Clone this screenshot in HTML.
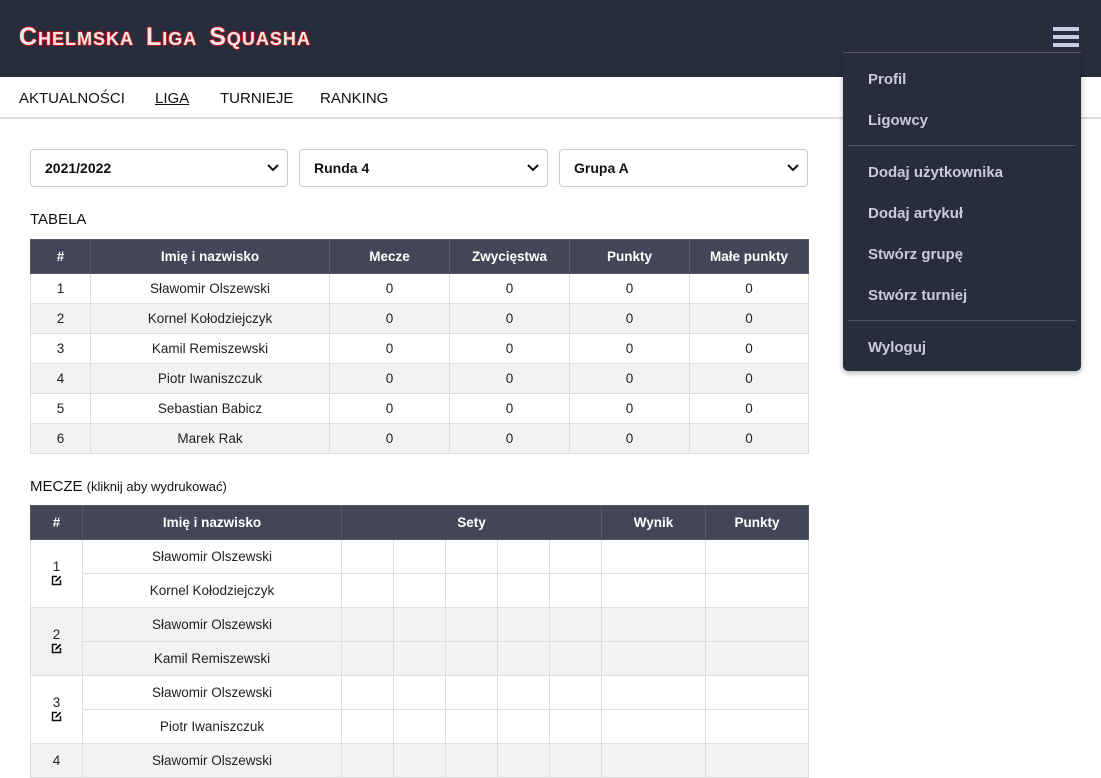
<!DOCTYPE html>
<html><head><meta charset="utf-8"><style>
*{box-sizing:border-box;margin:0;padding:0}
body{width:1101px;height:747px;overflow:hidden;background:#fff;font-family:"Liberation Sans","DejaVu Sans",sans-serif;color:#222;position:relative}
.hdr{position:absolute;left:0;top:0;width:1101px;height:77px;background:#282d3e}
.logo{position:absolute;left:19px;top:23px;font-family:"Liberation Sans",sans-serif;font-weight:bold;font-variant:small-caps;font-size:25px;letter-spacing:1px;color:#f2e6e6;text-shadow:1px 0 #c01818,-1px 0 #c01818,0 1px #c01818,0 -1px #c01818;word-spacing:4px}
.ham{position:absolute;left:1053px;top:27px;width:26px}
.ham i{display:block;height:4px;background:#c9cde0;margin-bottom:4px}
.nav{position:absolute;left:0;top:77px;width:1101px;height:42px;border-bottom:2px solid #ddd;font-size:15px;color:#111}
.nav span{position:absolute;top:13px}
.sel{position:absolute;top:149px;height:38px;border:1px solid #ccc;border-radius:4px;font-size:14px;font-weight:bold;padding:10px 0 0 14px;color:#111}
.sel svg{position:absolute;right:8px;top:14px}
.h{position:absolute;left:30px;font-size:15px;color:#111}
table{position:absolute;left:30px;border-collapse:collapse;table-layout:fixed;font-size:13.5px;text-align:center;color:#222}
th{background:#434656;color:#fff;font-weight:bold;font-size:13.5px;border:1px solid #555869;height:34px}
td{border:1px solid #ddd}
.t1 tr.r{height:30px}
.t1 tr.r:nth-child(odd) td{background:#f2f2f2}
.t2 td{height:34px}
.g td{background:#f2f2f2}
.menu{position:absolute;left:843px;top:52px;width:238px;height:319px;background:#282d3e;border-radius:0 0 5px 5px;border-top:1px solid #555a6a;box-shadow:0 2px 6px rgba(0,0,0,.3)}
.menu span{position:absolute;left:25px;font-size:15px;font-weight:bold;color:#c8cbd9}
.menu hr{position:absolute;left:5px;width:228px;border:0;border-top:1px solid #4d5263}
</style></head><body>
<div class="hdr"><div class="logo">Chelmska Liga Squasha</div><div class="ham"><i></i><i></i><i></i></div></div>
<div class="nav"><span style="left:19px">AKTUALNOŚCI</span><span style="left:155px;text-decoration:underline">LIGA</span><span style="left:220px">TURNIEJE</span><span style="left:320px">RANKING</span></div>
<div class="sel" style="left:30px;width:258px">2021/2022<svg width="12" height="8" viewBox="0 0 12 8"><path d="M1 1l5 5 5-5" stroke="#111" stroke-width="2" fill="none"/></svg></div>
<div class="sel" style="left:299px;width:249px">Runda 4<svg width="12" height="8" viewBox="0 0 12 8"><path d="M1 1l5 5 5-5" stroke="#111" stroke-width="2" fill="none"/></svg></div>
<div class="sel" style="left:559px;width:249px">Grupa A<svg width="12" height="8" viewBox="0 0 12 8"><path d="M1 1l5 5 5-5" stroke="#111" stroke-width="2" fill="none"/></svg></div>
<div class="h" style="top:211px">TABELA</div>
<table class="t1" style="top:239px;width:778px">
<colgroup><col style="width:60px"><col style="width:239px"><col style="width:120px"><col style="width:120px"><col style="width:120px"><col style="width:119px"></colgroup>
<tr><th>#</th><th>Imię i nazwisko</th><th>Mecze</th><th>Zwycięstwa</th><th>Punkty</th><th>Małe punkty</th></tr>
<tr class="r"><td>1</td><td>Sławomir Olszewski</td><td>0</td><td>0</td><td>0</td><td>0</td></tr>
<tr class="r"><td>2</td><td>Kornel Kołodziejczyk</td><td>0</td><td>0</td><td>0</td><td>0</td></tr>
<tr class="r"><td>3</td><td>Kamil Remiszewski</td><td>0</td><td>0</td><td>0</td><td>0</td></tr>
<tr class="r"><td>4</td><td>Piotr Iwaniszczuk</td><td>0</td><td>0</td><td>0</td><td>0</td></tr>
<tr class="r"><td>5</td><td>Sebastian Babicz</td><td>0</td><td>0</td><td>0</td><td>0</td></tr>
<tr class="r"><td>6</td><td>Marek Rak</td><td>0</td><td>0</td><td>0</td><td>0</td></tr>
</table>
<div class="h" style="top:478px">MECZE <span style="font-size:13px">(kliknij aby wydrukować)</span></div>
<table class="t2" style="top:505px;width:778px">
<colgroup><col style="width:52px"><col style="width:259px"><col style="width:52px"><col style="width:52px"><col style="width:52px"><col style="width:52px"><col style="width:52px"><col style="width:104px"><col style="width:103px"></colgroup>
<tr><th>#</th><th>Imię i nazwisko</th><th colspan="5">Sety</th><th>Wynik</th><th>Punkty</th></tr>
<tr><td rowspan="2">1<br><svg width="11" height="11" viewBox="0 0 11 11"><path d="M6 1.5H1.5v8h8V5" stroke="#111" stroke-width="1.5" fill="none"/><path d="M4 7l1-2.5L9 .8 10.2 2 6.5 6z" fill="#111"/></svg></td><td>Sławomir Olszewski</td><td></td><td></td><td></td><td></td><td></td><td></td><td></td></tr>
<tr><td>Kornel Kołodziejczyk</td><td></td><td></td><td></td><td></td><td></td><td></td><td></td></tr>
<tr class="g"><td rowspan="2">2<br><svg width="11" height="11" viewBox="0 0 11 11"><path d="M6 1.5H1.5v8h8V5" stroke="#111" stroke-width="1.5" fill="none"/><path d="M4 7l1-2.5L9 .8 10.2 2 6.5 6z" fill="#111"/></svg></td><td>Sławomir Olszewski</td><td></td><td></td><td></td><td></td><td></td><td></td><td></td></tr>
<tr class="g"><td>Kamil Remiszewski</td><td></td><td></td><td></td><td></td><td></td><td></td><td></td></tr>
<tr><td rowspan="2">3<br><svg width="11" height="11" viewBox="0 0 11 11"><path d="M6 1.5H1.5v8h8V5" stroke="#111" stroke-width="1.5" fill="none"/><path d="M4 7l1-2.5L9 .8 10.2 2 6.5 6z" fill="#111"/></svg></td><td>Sławomir Olszewski</td><td></td><td></td><td></td><td></td><td></td><td></td><td></td></tr>
<tr><td>Piotr Iwaniszczuk</td><td></td><td></td><td></td><td></td><td></td><td></td><td></td></tr>
<tr class="g"><td rowspan="2">4</td><td>Sławomir Olszewski</td><td></td><td></td><td></td><td></td><td></td><td></td><td></td></tr>
</table>
<div class="menu">
<span style="top:18px">Profil</span>
<span style="top:59px">Ligowcy</span>
<hr style="top:92px">
<span style="top:111px">Dodaj użytkownika</span>
<span style="top:152px">Dodaj artykuł</span>
<span style="top:193px">Stwórz grupę</span>
<span style="top:234px">Stwórz turniej</span>
<hr style="top:267px">
<span style="top:286px">Wyloguj</span>
</div>
</body></html>
